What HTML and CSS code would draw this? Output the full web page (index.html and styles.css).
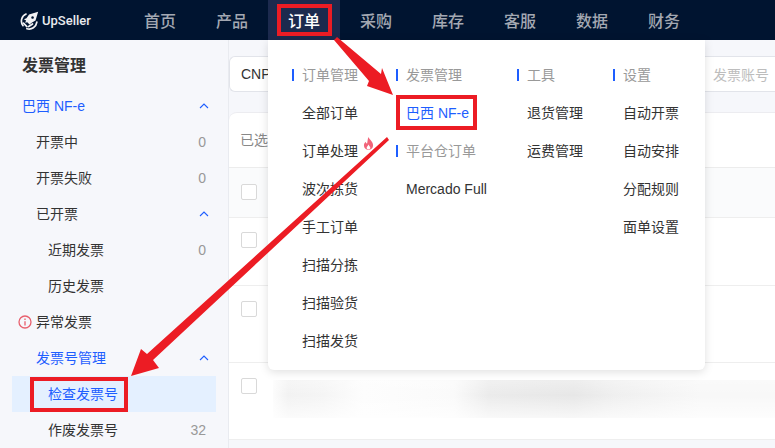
FILE: index.html
```html
<!DOCTYPE html>
<html lang="zh-CN">
<head>
<meta charset="utf-8">
<title>UpSeller</title>
<link rel="stylesheet" href="styles.css">
</head>
<body>
<header class="topbar">
  <div class="logo">
    <svg class="logo-mark" viewBox="0 0 22 22" width="19" height="19">
      <path d="M21 1 L10.500 4 L7.500 8.500 L4.500 9.500 L7 11 L6 13.500 L8.500 13 L11 15.500 L13.500 13.500 L18 11 Z M14.500 6 A1.500 1.500 0 1 0 14.600 6 Z" fill="#f2f3f5" fill-rule="evenodd"/>
      <g fill="none" stroke="#f2f3f5" stroke-width="2" stroke-linecap="round">
        <path d="M7 3.500 A8.800 8.800 0 0 0 3.500 17"/>
        <path d="M8 20.500 A9 9 0 0 0 19.500 13"/>
        <path d="M4 14 L8 18"/>
        <path d="M10 18 L14.500 15"/>
      </g>
    </svg>
    <span class="logo-text">UpSeller</span>
  </div>
  <nav class="nav">
    <a class="nav-item">首页</a>
    <a class="nav-item">产品</a>
    <a class="nav-item active">订单</a>
    <a class="nav-item">采购</a>
    <a class="nav-item">库存</a>
    <a class="nav-item">客服</a>
    <a class="nav-item">数据</a>
    <a class="nav-item">财务</a>
  </nav>
</header>
<div class="layout">
  <aside class="sidebar">
    <h2 class="side-title">发票管理</h2>
    <div class="side-row open l0"><span>巴西 NF-e</span><svg class="chev" viewBox="0 0 10 6"><path d="M1 5 L5 1 L9 5"/></svg></div>
    <div class="side-row l1"><span>开票中</span><em>0</em></div>
    <div class="side-row l1"><span>开票失败</span><em>0</em></div>
    <div class="side-row l1"><span>已开票</span><svg class="chev" viewBox="0 0 10 6"><path d="M1 5 L5 1 L9 5"/></svg></div>
    <div class="side-row l2"><span>近期发票</span><em>0</em></div>
    <div class="side-row l2"><span>历史发票</span></div>
    <div class="side-row warn"><svg class="info" viewBox="0 0 14 14"><circle cx="7" cy="7" r="6"/><path d="M7 6.200 V10.400 M7 3.600 V5"/></svg><span>异常发票</span></div>
    <div class="side-row open l1"><span>发票号管理</span><svg class="chev" viewBox="0 0 10 6"><path d="M1 5 L5 1 L9 5"/></svg></div>
    <div class="side-row l2 selected"><span>检查发票号</span></div>
    <div class="side-row l2"><span>作废发票号</span><em>32</em></div>
  </aside>
  <main class="content">
    <div class="filter">
      <span class="filter-cnp">CNPJ</span>
      <span class="filter-ph">发票账号</span>
    </div>
    <section class="card">
      <div class="card-head">已选 0</div>
      <div class="row row-h"><i class="check"></i></div>
      <div class="row row-a"><i class="check"></i></div>
      <div class="row row-b"><i class="check"></i></div>
      <div class="row row-c"><i class="check"></i><div class="blur"></div></div>
    </section>
  </main>
</div>
<div class="menu">
  <div class="col col1">
    <h3>订单管理</h3>
    <a>全部订单</a>
    <a class="hot">订单处理<svg class="fire" viewBox="0 0 12 14"><path d="M6 0 C7 3 11 5 11 9 C11 12 9 14 6 14 C3 14 1 12 1 9 C1 7 2 6 3 5 C3 6 4 7 4.500 7 C5 5 5 2 6 0 Z M6 8 C5 10 4 10.500 4 12 C4 13 5 13.500 6 13.500 C7 13.500 8 13 8 12 C8 10.500 7 10 6 8 Z" fill-rule="evenodd"/></svg></a>
    <a>波次拣货</a>
    <a>手工订单</a>
    <a>扫描分拣</a>
    <a>扫描验货</a>
    <a>扫描发货</a>
  </div>
  <div class="col col2">
    <h3>发票管理</h3>
    <a class="link">巴西 NF-e</a>
    <h3>平台仓订单</h3>
    <a>Mercado Full</a>
  </div>
  <div class="col col3">
    <h3>工具</h3>
    <a>退货管理</a>
    <a>运费管理</a>
  </div>
  <div class="col col4">
    <h3>设置</h3>
    <a>自动开票</a>
    <a>自动安排</a>
    <a>分配规则</a>
    <a>面单设置</a>
  </div>
</div>
<svg class="marks" viewBox="0 0 775 448" width="775" height="448">
  <g fill="none" stroke="#ec1c24" stroke-width="4">
    <rect x="279" y="6" width="51" height="28" />
    <rect x="398" y="97" width="77" height="31" />
    <rect x="32" y="379" width="94" height="31" />
  </g>
  <path fill="#ec1c24" d="M334 40 L337 37 L381 74 L382 68 L393 95 L367 86 L369 81 Z"/>
  <path fill="#ec1c24" d="M387 137 L389 140 L153 360 L159 368 L131 376 L141 349 L147 354 Z"/>
</svg>
</body>
</html>
```
FILE: styles.css
```css
* { box-sizing: border-box; }
html, body { margin: 0; padding: 0; }
body {
  width: 775px; height: 448px; overflow: hidden; position: relative;
  background: #f6f7fb;
  font-family: "Liberation Sans", "Noto Sans CJK SC", sans-serif;
  font-size: 14px; color: #333;
}
.topbar { height: 40px; background: #001430; display: flex; align-items: stretch; }
.logo { width: 124px; padding-left: 20px; display: flex; align-items: center; gap: 3px; color: #e8eaee; }
.logo-text { font-family: Roboto, sans-serif; font-size: 13px; font-weight: 500; }
.nav { display: flex; }
.nav-item { width: 72px; display: flex; align-items: center; justify-content: center; font-size: 16px; font-weight: 500; color: #a3a8b2; }
.nav-item.active { background: #1c2a4e; color: #fff; }

.layout { display: flex; height: 408px; }
.sidebar { width: 229px; flex: none; border-right: 1px solid #e9ebf0; padding: 13px 12px 0; }
.side-title { margin: 0 0 9px 10px; font-size: 16px; font-weight: 700; line-height: 26px; color: #333; }
.side-row { height: 36px; display: flex; align-items: center; justify-content: space-between; padding-right: 10px; color: #333; line-height: 36px; }
.side-row em { font-style: normal; color: #999; }
.side-row.l0 { padding-left: 10px; }
.side-row.l1 { padding-left: 24px; }
.side-row.l2 { padding-left: 36px; }
.side-row.warn { padding-left: 6px; justify-content: flex-start; gap: 4px; }
.side-row.open { color: #1e5eff; }
.side-row.selected { background: #e4f0ff; color: #1e5eff; }
.chev { width: 10px; height: 6px; margin-right: -3px; fill: none; stroke: #1e5eff; stroke-width: 1.100; }
.info { width: 14px; height: 14px; fill: none; stroke: #e8606e; stroke-width: 1.300; }

.content { flex: 1; min-width: 0; padding-top: 16px; }
.filter { height: 36px; background: #fff; border: 1px solid #e2e4ea; border-right: 0; border-radius: 6px 0 0 6px; display: flex; align-items: center; justify-content: space-between; padding: 0 6px 0 11px; }
.filter-ph { color: #bdbdbd; }
.card { margin-top: 20px; background: #fff; border-top: 1px solid #ececf0; border-radius: 8px 0 0 0; }
.card-head { height: 55px; line-height: 55px; padding-left: 11px; color: #888; border-bottom: 1px solid #ececec; }
.row { border-bottom: 1px solid #eee; padding: 15px 0 0 12px; display: flex; gap: 16px; }
.row-h { height: 50px; padding-top: 16px; background: #fafbfc; }
.row-a { height: 68px; padding-top: 14px; }
.row-b { height: 77px; }
.row-c { height: 77px; }
.check { display: block; width: 16px; height: 16px; border: 1px solid #d9d9d9; border-radius: 2px; background: #fff; flex: none; }
.blur { flex: 1; height: 38px; position: relative; margin-top: 2px; background: linear-gradient(90deg, #fcfcfc 0, #f2f2f2 3%, #f5f5f5 10%, #fdfdfd 18%, #fafafa 36%, #ebebeb 43%, #e7e7e7 60%, #efefef 68%, #f8f8f8 85%, #f8f8f8 100%); }
.blur::after { content: ""; position: absolute; inset: 0; background: linear-gradient(180deg, rgba(255,255,255,.3), rgba(255,255,255,0) 40%, rgba(255,255,255,.7)); }

.menu {
  position: absolute; left: 268px; top: 40px; width: 437px; height: 330px;
  background: #fff; border-radius: 0 0 6px 6px; box-shadow: 0 2px 10px rgba(0,0,0,.13);
  display: flex; padding-top: 25px;
}
.col h3 { margin: 0; height: 20px; line-height: 20px; font-size: 14px; font-weight: 400; color: #999; position: relative; padding-left: 10px; white-space: nowrap; }
.col h3::before { content: ""; position: absolute; left: 0; top: 4px; width: 2px; height: 12px; background: #1e5eff; }
.col a { display: block; height: 38px; line-height: 38px; padding-left: 10px; color: #333; white-space: nowrap; }
.col h3 + a { margin-top: 9px; }
.col a + h3 { margin-top: 9px; }
.col1 { margin-left: 24px; width: 104px; }
.col2 { width: 121px; }
.col3 { width: 96px; }
.col .link { color: #1e5eff; }
.hot { position: relative; }
.fire { position: absolute; left: 71px; top: 5px; width: 11px; height: 13px; fill: #f2647a; }
.marks { position: absolute; left: 0; top: 0; pointer-events: none; }
```
